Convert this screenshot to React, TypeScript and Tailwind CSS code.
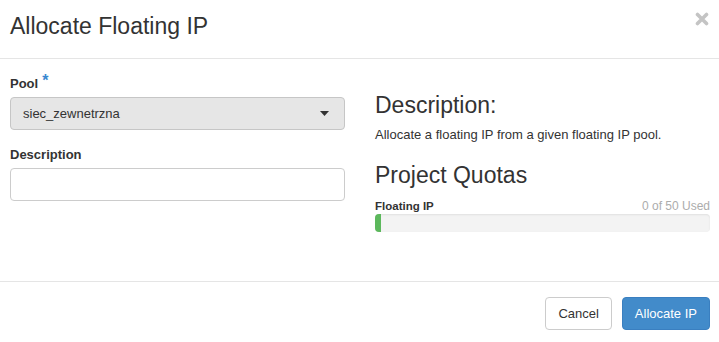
const font = { fontFamily: '"Liberation Sans", Arial, sans-serif' };

const CloseIcon = () => (
  <svg width="14" height="14" viewBox="0 0 14 14" className="text-[#c4c4c4]">
    <path d="M2.5 2.5 L11.5 11.5 M11.5 2.5 L2.5 11.5" stroke="currentColor" strokeWidth="3.6" strokeLinecap="round" />
  </svg>
);

const Caret = () => (
  <svg width="9" height="5" viewBox="0 0 9 5">
    <path d="M0 0 H9 L4.5 5 Z" fill="#333" />
  </svg>
);

export default function App() {
  return (
    <div className="w-[719px] h-[342px] bg-white text-[#333] flex flex-col" style={font}>
      {/* header */}
      <div className="h-[59px] border-b border-[#e5e5e5] flex justify-between pl-[10px] pr-[10px] pt-[13px]">
        <h4 className="text-[23px] leading-[26px]">Allocate Floating IP</h4>
        <button className="mt-[-1px] h-[14px] mr-0">
          <CloseIcon />
        </button>
      </div>

      {/* body */}
      <div className="flex-1 flex gap-[30px] pl-[10px] pr-[9px] pt-[16px]">
        <div className="w-[335px] flex flex-col">
          <label className="text-[13px] leading-[18px] font-bold flex">
            Pool
            <span className="text-[#3a87d0] text-[16px] leading-[18px] ml-[4px] relative -top-[3px]">*</span>
          </label>
          <div className="mt-[4px] h-[33px] rounded-[4px] border border-[#c6c6c6] bg-[#e6e6e6] flex items-center justify-between pl-[12px] pr-[15px]">
            <span className="text-[13px]">siec_zewnetrzna</span>
            <Caret />
          </div>
          <label className="mt-[16px] text-[13px] leading-[18px] font-bold">Description</label>
          <input className="mt-[4px] h-[33px] rounded-[4px] border border-[#cccccc] bg-white outline-none px-[12px] text-[13px]" />
        </div>

        <div className="w-[335px] flex flex-col">
          <h3 className="mt-[17px] text-[23px] leading-[26px]">Description:</h3>
          <p className="mt-[8px] text-[13px] leading-[18px]">Allocate a floating IP from a given floating IP pool.</p>
          <h3 className="mt-[18px] text-[23px] leading-[26px]">Project Quotas</h3>
          <div className="mt-[10px] flex justify-between leading-[16px]">
            <span className="text-[11.5px] font-bold">Floating IP</span>
            <span className="text-[12px] text-[#acacac]">0 of 50 Used</span>
          </div>
          <div className="h-[18px] rounded-[4px] bg-[#f3f3f3] shadow-[inset_0_1px_2px_rgba(0,0,0,0.08)] overflow-hidden">
            <div className="h-full w-[6px] bg-[#5cb85c]" />
          </div>
        </div>
      </div>

      {/* footer */}
      <div className="border-t border-[#e5e5e5] flex justify-end gap-[10px] pr-[9px] pt-[15px] pb-[12px]">
        <button className="h-[33px] px-[12px] rounded-[4px] border border-[#cccccc] bg-white text-[13px] text-[#333]">
          Cancel
        </button>
        <button className="h-[33px] px-[12px] rounded-[4px] border border-[#3a7fc0] bg-[#428bca] text-[13px] text-white">
          Allocate IP
        </button>
      </div>
    </div>
  );
}
